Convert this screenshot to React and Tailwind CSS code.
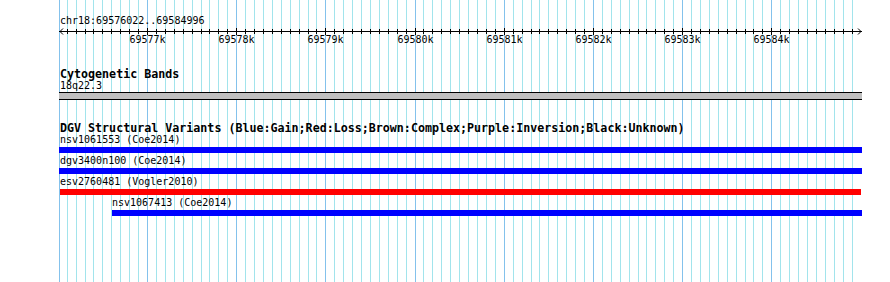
const START = 69576100;
const END = 69584900;
const scale = 0.08919;
const toX = (bp) => Math.round(147 + (bp - 69577000) * scale);

const grid = [];
for (let bp = START; bp <= END; bp += 100) {
  grid.push({ bp, x: toX(bp), major: bp % 1000 === 0 });
}
const majors = grid.filter((g) => g.major);

const variants = [
  { label: 'nsv1061553 (Coe2014)', color: 'bg-[#0000ff]', bar: 'ml-[59px] w-[803px]', text: 'pl-[60px]' },
  { label: 'dgv3400n100 (Coe2014)', color: 'bg-[#0000ff]', bar: 'ml-[59px] w-[803px]', text: 'pl-[60px]' },
  { label: 'esv2760481 (Vogler2010)', color: 'bg-[#ff0000]', bar: 'ml-[60px] w-[801px]', text: 'pl-[60px]' },
  { label: 'nsv1067413 (Coe2014)', color: 'bg-[#0000ff]', bar: 'ml-[112px] w-[750px]', text: 'pl-[112px]' },
];

function Grid() {
  return (
    <svg className="absolute inset-0" width="890" height="282" shapeRendering="crispEdges">
      <line x1="59.5" y1="0" x2="59.5" y2="282" stroke="#84c2ec" />
      {grid.map((g) => (
        <line
          key={g.bp}
          x1={g.x + 0.5}
          y1="0"
          x2={g.x + 0.5}
          y2="282"
          stroke={g.major ? '#84c2ec' : '#a2e4ec'}
        />
      ))}
    </svg>
  );
}

function Ruler() {
  return (
    <svg className="mt-[2px] block" width="890" height="7" shapeRendering="crispEdges">
      <line x1="59" y1="3.5" x2="862" y2="3.5" stroke="#000" />
      <polyline points="63,0.5 60,3.5 63,6.5" fill="none" stroke="#000" shapeRendering="auto" />
      <polyline points="858,0.5 861,3.5 858,6.5" fill="none" stroke="#000" shapeRendering="auto" />
      {grid.map((g) => (
        <line
          key={g.bp}
          x1={g.x + 0.5}
          y1={g.major ? 0 : 1}
          x2={g.x + 0.5}
          y2={g.major ? 7 : 6}
          stroke="#000"
        />
      ))}
    </svg>
  );
}

export default function App() {
  return (
    <div className="relative w-[890px] h-[282px] overflow-hidden bg-white text-black font-['DejaVu_Sans_Mono',monospace]">
      <Grid />
      <div className="relative flex flex-col">
        {/* Ruler */}
        <div className="pt-[16px] pl-[60px] text-[10px] leading-[10px]">chr18:69576022..69584996</div>
        <Ruler />
        <div className="relative h-[10px] text-[10px] leading-[10px]">
          {majors.map((g) => (
            <span
              key={g.bp}
              className="absolute top-0 w-[36px] text-center"
              style={{ left: g.x - 17.5 }}
            >
              {g.bp / 1000}k
            </span>
          ))}
        </div>

        {/* Cytogenetic Bands */}
        <div className="mt-[23px] pl-[60px] text-[11.67px] leading-[12px] font-bold">Cytogenetic Bands</div>
        <div className="mt-[1px] pl-[60px] text-[10px] leading-[10px]">18q22.3</div>
        <div className="mt-[1px] ml-[59px] w-[803px] h-[8px] border-y border-black bg-[#c0c0c0]" />

        {/* DGV */}
        <div className="mt-[22px] pl-[60px] text-[11.67px] leading-[12px] font-bold whitespace-nowrap">
          DGV Structural Variants (Blue:Gain;Red:Loss;Brown:Complex;Purple:Inversion;Black:Unknown)
        </div>
        <div className="mt-[1px] flex flex-col">
          {variants.map((v) => (
            <div key={v.label} className="flex flex-col h-[21px]">
              <div className={`${v.text} text-[10px] leading-[10px] whitespace-nowrap`}>{v.label}</div>
              <div className={`mt-[2px] h-[6px] ${v.bar} ${v.color}`} />
            </div>
          ))}
        </div>
      </div>
    </div>
  );
}
